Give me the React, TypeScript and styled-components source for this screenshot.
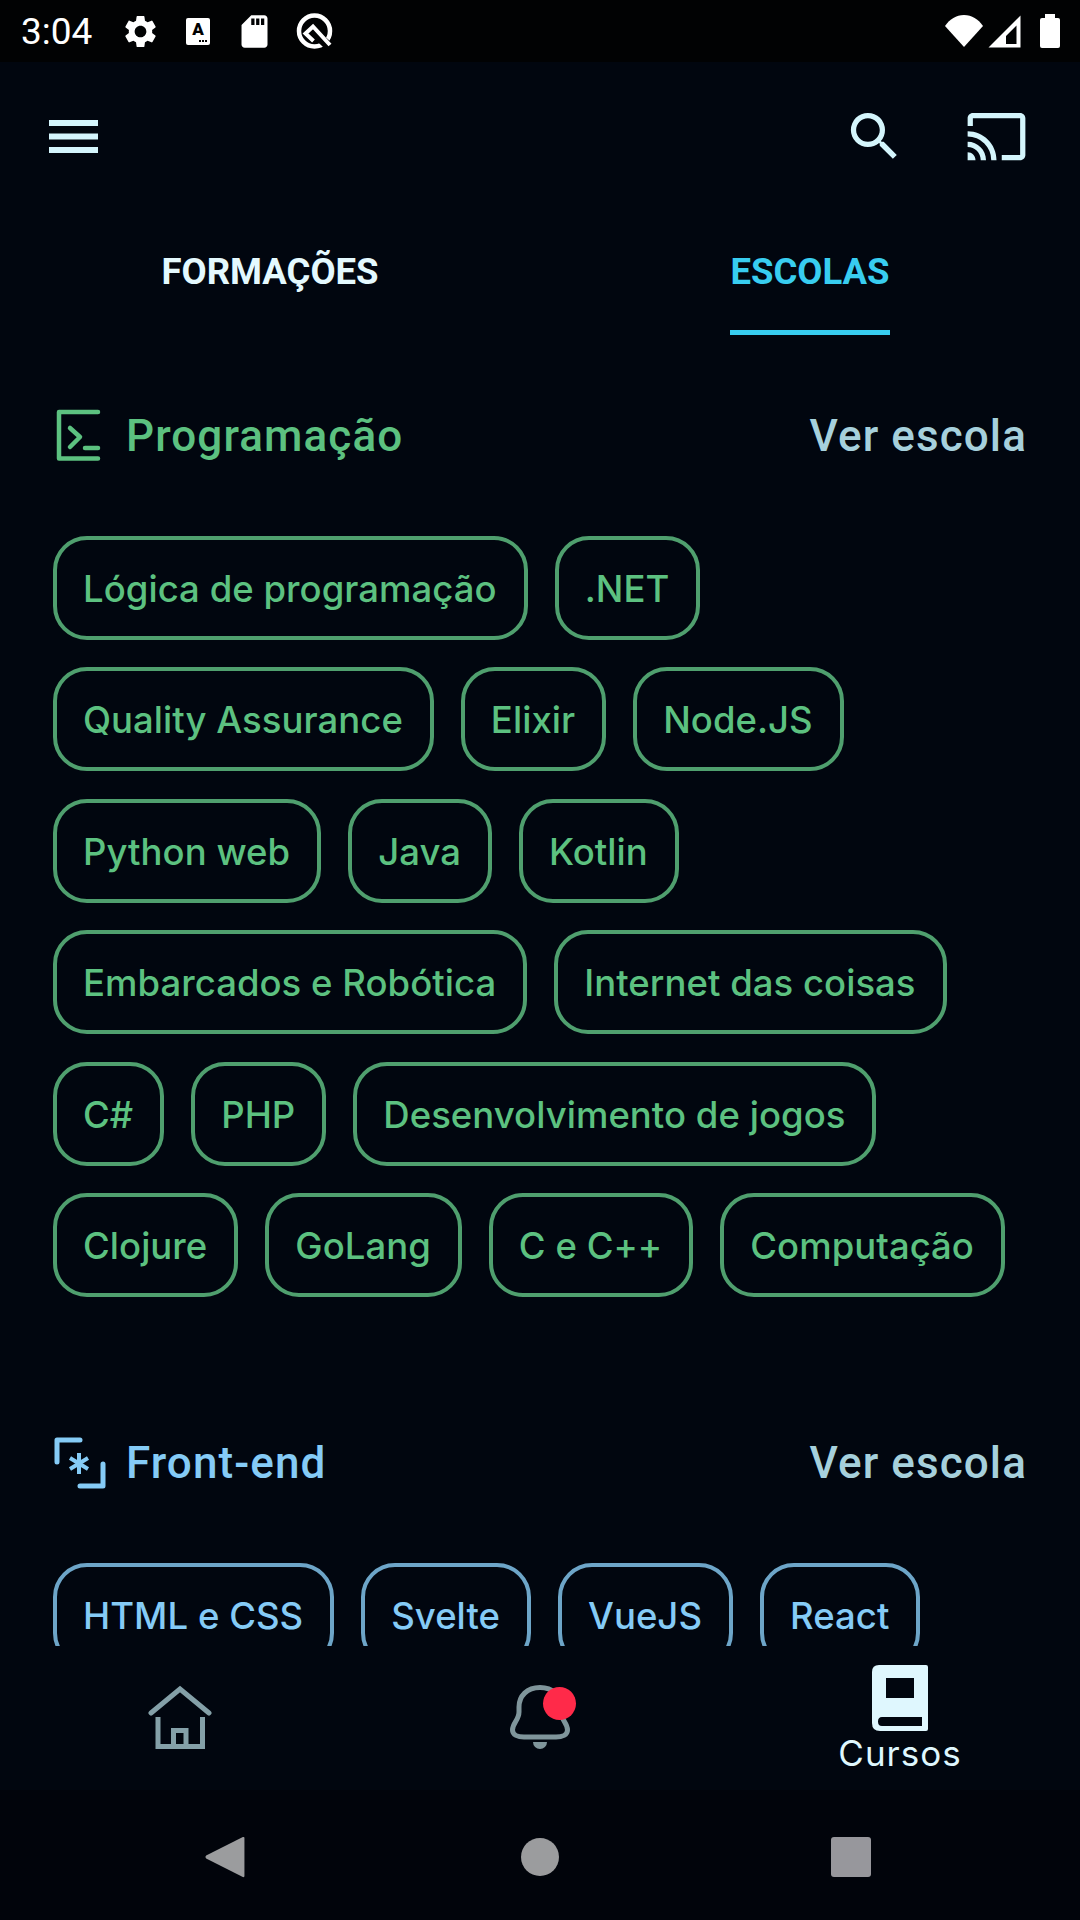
import styled, { createGlobalStyle } from 'styled-components';
import { MdCast, MdSdCard, MdSearch, MdSettings } from 'react-icons/md';

type Tone = { text: string; border: string };

const GREEN: Tone = { text: '#5cc180', border: '#4f9f6e' };
const BLUE: Tone = { text: '#85cbf6', border: '#6da5c8' };

const programacao = [
  'Lógica de programação',
  '.NET',
  'Quality Assurance',
  'Elixir',
  'Node.JS',
  'Python web',
  'Java',
  'Kotlin',
  'Embarcados e Robótica',
  'Internet das coisas',
  'C#',
  'PHP',
  'Desenvolvimento de jogos',
  'Clojure',
  'GoLang',
  'C e C++',
  'Computação',
];

const frontEnd = ['HTML e CSS', 'Svelte', 'VueJS', 'React'];

const GlobalStyle = createGlobalStyle`
  html, body {
    margin: 0;
    padding: 0;
    background: #01060f;
  }
  * {
    box-sizing: border-box;
  }
`;

export default function App() {
  return (
    <>
      <GlobalStyle />
      <SScreen>
        <SStatusBar>
          <STime>3:04</STime>
          <SStatusIcons>
            <MdSettings size={39} color="#fff" />
            <SKeyboardBadge>A</SKeyboardBadge>
            <MdSdCard size={39} color="#fff" />
            <svg width="38" height="37" viewBox="0 0 38 37" fill="none">
              <circle cx="18.5" cy="18" r="15.5" stroke="#fff" strokeWidth="4.5" />
              <path d="M24 25 L38 38" stroke="#010203" strokeWidth="9" />
              <path d="M34 32 L17 13.5 L9.5 20.5 L17.5 28" stroke="#fff" strokeWidth="4" />
            </svg>
          </SStatusIcons>
          <SStatusRight>
            <svg width="40" height="34" viewBox="0 0 40 34">
              <path d="M1 12 C6 5 12 1 20 1 C28 1 34 5 39 12 L20 33Z" fill="#fff" />
            </svg>
            <svg width="33" height="33" viewBox="0 0 33 33">
              <path
                fillRule="evenodd"
                d="M0.5 32.5 L32.5 0.5 V32.5Z M18 29 H28.5 V10.5 L18 21Z"
                fill="#fff"
              />
            </svg>
            <SBattery />
          </SStatusRight>
        </SStatusBar>

        <SAppBar>
          <svg width="49" height="33" viewBox="0 0 49 33">
            <path d="M0 0H49V6H0Z M0 13.5H49V19.5H0Z M0 27H49V33H0Z" fill="#d4f5fc" />
          </svg>
          <SAppBarActions>
            <MdSearch size={63} color="#d4f5fc" />
            <MdCast size={63} color="#d4f5fc" />
          </SAppBarActions>
        </SAppBar>

        <STabs>
          <STab>
            <STabLabel>FORMAÇÕES</STabLabel>
          </STab>
          <STab>
            <STabLabel $active>ESCOLAS</STabLabel>
          </STab>
        </STabs>

        <SScroll>
          <SSection>
            <SSectionHeader>
              <STitleGroup>
                <SIconSlot>
                  <svg width="54" height="54" viewBox="0 0 54 54" fill="none" stroke={GREEN.text} strokeWidth="4.5" strokeLinecap="round" strokeLinejoin="round">
                    <path d="M45 3 H6 V49.5 H45" />
                    <path d="M17 19 L27 28 L17 38" />
                    <path d="M32 39 H45" />
                  </svg>
                </SIconSlot>
                <STitle $tone={GREEN}>Programação</STitle>
              </STitleGroup>
              <SSeeSchool>Ver escola</SSeeSchool>
            </SSectionHeader>
            <SChips>
              {programacao.map((name) => (
                <SChip key={name} $tone={GREEN}>
                  {name}
                </SChip>
              ))}
            </SChips>
          </SSection>

          <SSection>
            <SSectionHeader>
              <STitleGroup>
                <SIconSlot>
                  <svg width="54" height="54" viewBox="0 0 54 54" fill="none" stroke={BLUE.text} strokeWidth="5" strokeLinecap="round" strokeLinejoin="round">
                    <path d="M27 4 H4 V26" />
                    <path d="M27 50 H50 V28" />
                    <path d="M26 17 V38 M17 22 L35 33 M35 22 L17 33" strokeLinecap="butt" strokeWidth="4" />
                  </svg>
                </SIconSlot>
                <STitle $tone={BLUE}>Front-end</STitle>
              </STitleGroup>
              <SSeeSchool>Ver escola</SSeeSchool>
            </SSectionHeader>
            <SChips>
              {frontEnd.map((name) => (
                <SChip key={name} $tone={BLUE}>
                  {name}
                </SChip>
              ))}
            </SChips>
          </SSection>
        </SScroll>

        <SBottomNav>
          <SNavItem>
            <svg width="64" height="66" viewBox="0 0 64 66" fill="none" stroke="#84a0a8" strokeWidth="5">
              <path d="M3 28 L32 4 L61 28" strokeLinecap="round" />
              <path d="M10 32 V61.5 H54.5 V32" />
              <path d="M25.5 61 V45.5 H38 V61" />
            </svg>
          </SNavItem>
          <SNavItem>
            <SBellWrap>
              <svg width="60" height="66" viewBox="0 0 60 66" fill="none">
                <path
                  d="M30 2.5 C17 2.5 9 11 9 22 V27 C9 35 2.5 38 2.5 45 C2.5 50 8 52 14 52 H46 C52 52 57.5 50 57.5 45 C57.5 38 51 35 51 27 V22 C51 11 43 2.5 30 2.5Z"
                  stroke="#7f959b"
                  strokeWidth="5"
                />
                <path d="M23 57 H37 A7 7 0 0 1 23 57Z" fill="#7f959b" />
              </svg>
              <SBadge />
            </SBellWrap>
          </SNavItem>
          <SActiveNavItem>
            <svg width="56" height="66" viewBox="0 0 56 66">
              <path
                fillRule="evenodd"
                d="M7 0 H54 Q56 0 56 2 V64 Q56 66 54 66 H8 Q0 66 0 58 V7 Q0 0 7 0Z M14 13 V33 H42 V13Z M10 52 Q6 52 6 56.5 Q6 61 10 61 H50 V52Z"
                fill="#dff7fe"
              />
            </svg>
            <SNavLabel>Cursos</SNavLabel>
          </SActiveNavItem>
        </SBottomNav>

        <SAndroidNav>
          <SAndroidNavSlot>
            <svg width="41" height="44" viewBox="0 0 38 44" preserveAspectRatio="none">
              <path d="M36 2 Q37.5 1.5 37.5 3 V41 Q37.5 42.5 36 42 L2 23.5 Q0.5 22 2 20.5Z" fill="#9b9c9e" />
            </svg>
          </SAndroidNavSlot>
          <SAndroidNavSlot>
            <SHomeDot />
          </SAndroidNavSlot>
          <SAndroidNavSlot>
            <SRecents />
          </SAndroidNavSlot>
        </SAndroidNav>
      </SScreen>
    </>
  );
}

const SScreen = styled.div`
  width: 1080px;
  height: 1920px;
  display: flex;
  flex-direction: column;
  overflow: hidden;
  background: #01060f;
`;

const SStatusBar = styled.div`
  height: 62px;
  flex: none;
  display: flex;
  align-items: center;
  background: #010203;
  padding: 0 20px 0 21px;
  color: #fff;
`;

const STime = styled.span`
  font-family: 'Roboto', sans-serif;
  font-size: 37px;
  font-weight: 400;
  width: 100px;
`;

const SStatusIcons = styled.div`
  display: flex;
  align-items: center;
  gap: 22px;
`;

const SKeyboardBadge = styled.div`
  position: relative;
  width: 24px;
  height: 27px;
  margin: 0 3px 0 4px;
  background: #fff;
  border-radius: 2px;
  color: #000;
  font-family: 'Roboto', sans-serif;
  font-weight: 900;
  font-size: 17px;
  line-height: 22px;
  text-align: center;

  &::after {
    content: '';
    position: absolute;
    right: 9px;
    bottom: 3px;
    width: 2px;
    height: 2px;
    background: #000;
    box-shadow: 3px 0 #000, 6px 0 #000;
  }
`;

const SStatusRight = styled.div`
  margin-left: auto;
  display: flex;
  align-items: center;
  gap: 4px;
`;

const SBattery = styled.div`
  position: relative;
  width: 20px;
  height: 30px;
  margin: 4px 0 0 15px;
  background: #fff;
  border-radius: 2px;

  &::before {
    content: '';
    position: absolute;
    top: -4px;
    left: 5px;
    width: 10px;
    height: 4px;
    background: #fff;
  }
`;

const SAppBar = styled.div`
  height: 148px;
  flex: none;
  display: flex;
  align-items: center;
  justify-content: space-between;
  padding: 0 52px 0 49px;
`;

const SAppBarActions = styled.div`
  display: flex;
  align-items: center;
  gap: 59px;
`;

const STabs = styled.div`
  height: 125px;
  flex: none;
  display: grid;
  grid-template-columns: 1fr 1fr;
  padding-top: 39px;
`;

const STab = styled.div`
  display: flex;
  justify-content: center;
`;

const STabLabel = styled.span<{ $active?: boolean }>`
  display: block;
  height: 86px;
  font-family: 'Roboto', sans-serif;
  font-size: 36.5px;
  font-weight: 700;
  line-height: 46px;
  color: ${(p) => (p.$active ? '#38cdf0' : '#e4f9fe')};
  border-bottom: 5px solid ${(p) => (p.$active ? '#38cdf0' : 'transparent')};
`;

const SScroll = styled.div`
  flex: 1;
  min-height: 0;
  overflow: hidden;
  padding: 75px 53px 0;
  display: flex;
  flex-direction: column;
  gap: 140px;
`;

const SSection = styled.section`
  display: flex;
  flex-direction: column;
  gap: 74px;
  flex: none;
`;

const SSectionHeader = styled.div`
  height: 52px;
  display: flex;
  align-items: center;
  justify-content: space-between;
`;

const STitleGroup = styled.div`
  display: flex;
  align-items: center;
`;

const SIconSlot = styled.div`
  width: 73px;
  display: flex;
  justify-content: flex-start;
`;

const STitle = styled.span<{ $tone: Tone }>`
  font-family: 'Roboto', sans-serif;
  font-size: 44px;
  font-weight: 500;
  letter-spacing: 1.1px;
  color: ${(p) => p.$tone.text};
`;

const SSeeSchool = styled.span`
  font-family: 'Roboto', sans-serif;
  font-size: 44px;
  font-weight: 500;
  letter-spacing: 1.1px;
  color: #a6d0dc;
`;

const SChips = styled.div`
  display: flex;
  flex-wrap: wrap;
  gap: 27.4px 27px;
`;

const SChip = styled.div<{ $tone: Tone }>`
  height: 104px;
  padding: 2px 27px 0 26px;
  display: flex;
  align-items: center;
  border: 4px solid ${(p) => p.$tone.border};
  border-radius: 34px;
  font-family: 'Inter', sans-serif;
  font-size: 36.5px;
  font-weight: 500;
  letter-spacing: 0.04px;
  color: ${(p) => p.$tone.text};
  white-space: nowrap;
`;

const SBottomNav = styled.nav`
  height: 144px;
  flex: none;
  display: grid;
  grid-template-columns: repeat(3, 360px);
  background: #01060f;
`;

const SNavItem = styled.div`
  display: flex;
  flex-direction: column;
  align-items: center;
  justify-content: center;
`;

const SActiveNavItem = styled(SNavItem)`
  padding-top: 4px;
`;

const SBellWrap = styled.div`
  position: relative;
  height: 66px;
`;

const SBadge = styled.span`
  position: absolute;
  top: 2px;
  right: -6px;
  width: 33px;
  height: 33px;
  border-radius: 50%;
  background: #ff2a49;
`;

const SNavLabel = styled.span`
  font-family: 'Inter', sans-serif;
  font-size: 35px;
  letter-spacing: 1px;
  line-height: 44px;
  color: #dff7fe;
`;

const SAndroidNav = styled.div`
  height: 130px;
  flex: none;
  display: grid;
  grid-template-columns: 1fr 1fr 1fr;
  padding: 4px 72px 0 68px;
  align-items: center;
  background: #01040b;
`;

const SAndroidNavSlot = styled.div`
  display: flex;
  justify-content: center;
`;

const SHomeDot = styled.div`
  width: 38px;
  height: 38px;
  margin-left: 5px;
  border-radius: 50%;
  background: #9b9c9e;
`;

const SRecents = styled.div`
  width: 40px;
  height: 40px;
  border-radius: 3px;
  background: #97979c;
`;
